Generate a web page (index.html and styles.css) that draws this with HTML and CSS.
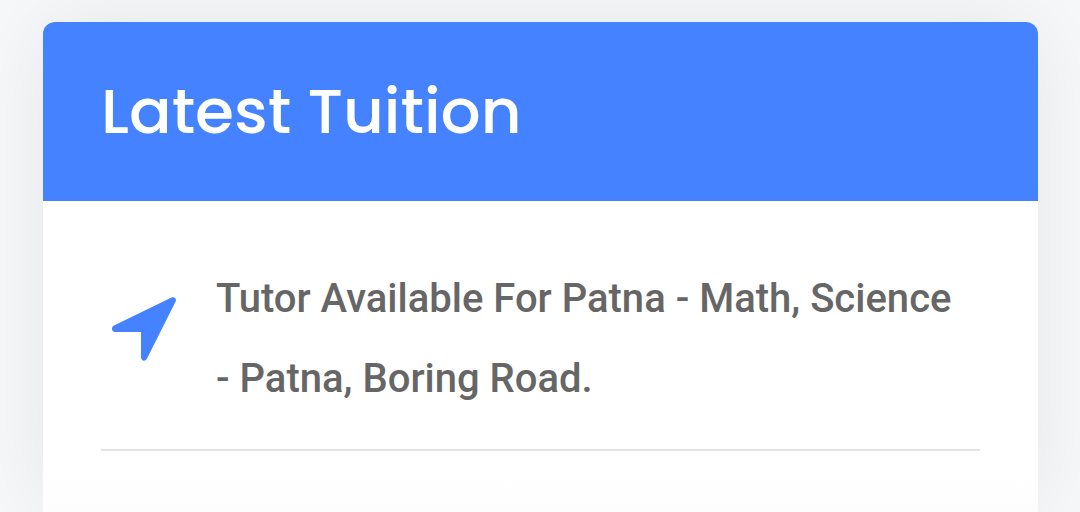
FILE: index.html
```html
<!DOCTYPE html>
<html lang="en">
<head>
<meta charset="utf-8">
<meta name="viewport" content="width=device-width, initial-scale=1">
<title>Latest Tuition</title>
<link rel="stylesheet" href="styles.css">
</head>
<body>
<section class="card">
  <header class="card-header"><h2 class="card-title">Latest Tuition</h2></header>
  <ul class="tuition-list">
    <li class="tuition-item">
      <svg class="tuition-icon" viewBox="0 0 64 64" aria-hidden="true"><path d="M59.500 .5C62.500-.8 65 1.800 63.500 4.800L35 61.500C33.300 65 29 64 29 60.300V35H3.200C-.6 35-1.100 30 2 28.500Z"/></svg>
      <p class="tuition-text">Tutor Available For Patna - Math, Science - Patna, Boring Road.</p>
    </li>
  </ul>
</section>
</body>
</html>
```
FILE: styles.css
```css
* { box-sizing: border-box; }
body {
  margin: 0;
  padding: 22px 42px 0 43px;
  min-height: 100vh;
  display: flex;
  background: #f7f8fa;
  overflow: hidden;
}
.card {
  flex: 1;
  min-width: 0;
  background: linear-gradient(to top, #fdfdfd, #fff 36px);
  border-radius: 12px 12px 0 0;
  box-shadow: 0 0 90px rgba(0, 0, 0, 0.08);
}
.card-header {
  padding: 41px 58px 42px;
  background: #4482ff;
  border-radius: 12px 12px 0 0;
}
.card-title {
  margin: 0;
  color: #fff;
  font: 500 63px/96px Poppins, Lato, sans-serif;
}
.tuition-list {
  margin: 0;
  padding: 58px 58px 0;
  list-style: none;
}
.tuition-item {
  display: flex;
  align-items: flex-start;
  padding-bottom: 30px;
  border-bottom: 2px solid #e2e2e2;
}
.tuition-icon {
  flex: none;
  width: 64px;
  height: 64px;
  margin: 38px 40px 0 11px;
  fill: #4482ff;
}
.tuition-text {
  margin: 0;
  padding-right: 16px;
  color: #666;
  font: 500 40px/80px Roboto, sans-serif;
}
```
